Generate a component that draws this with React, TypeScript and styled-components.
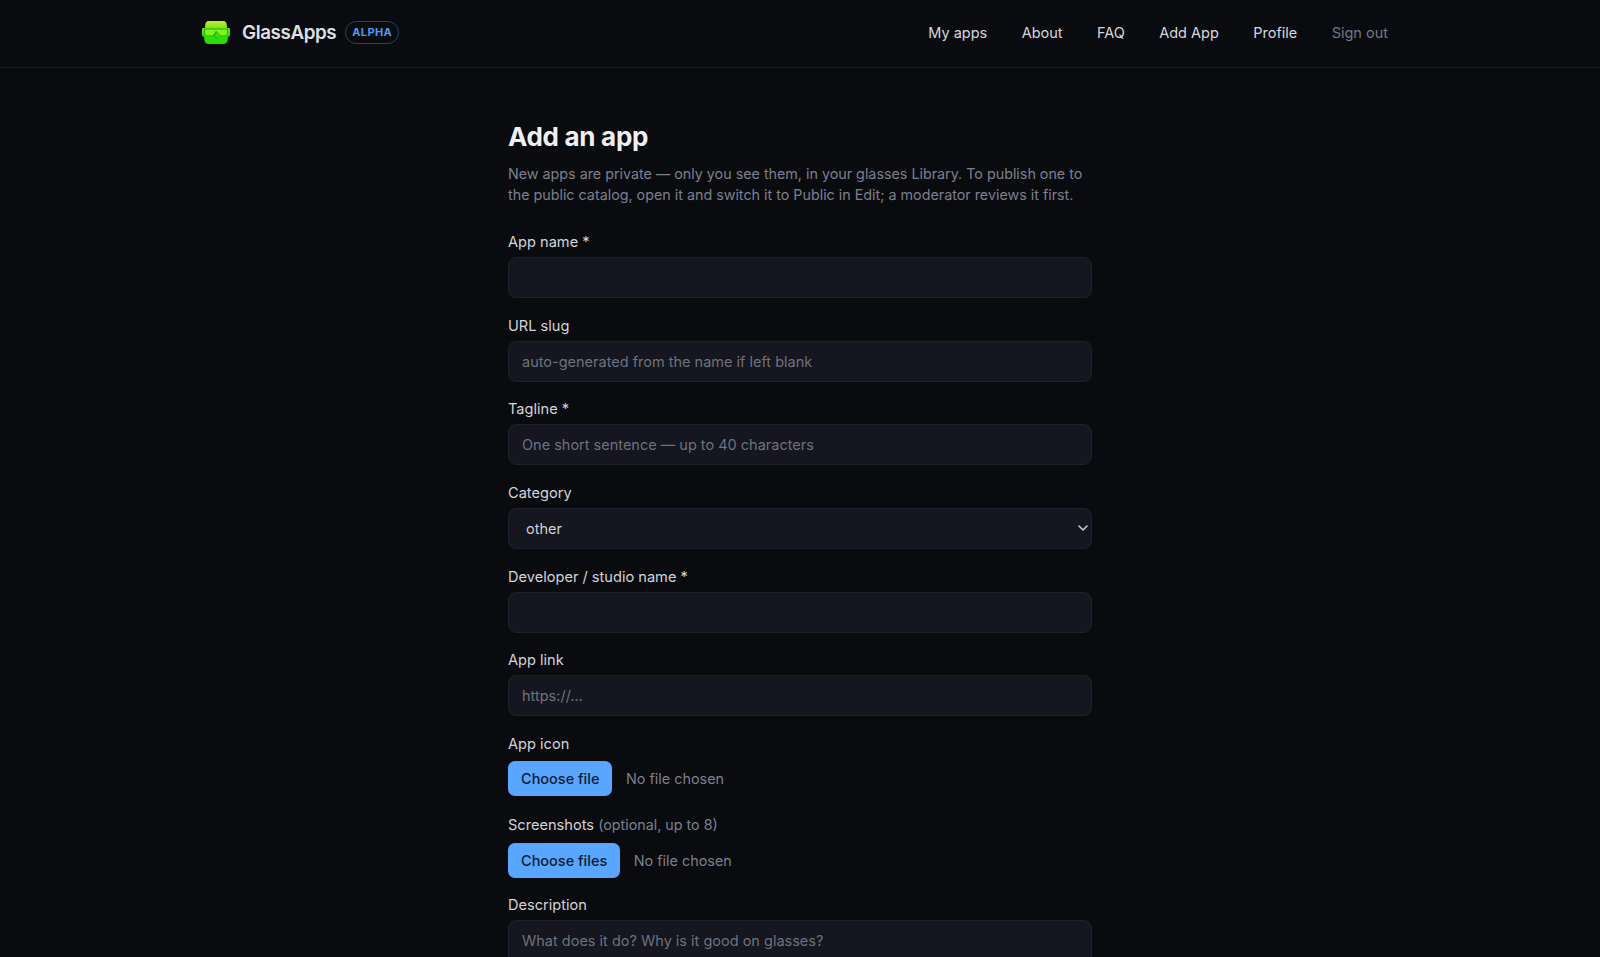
import React from 'react';
import styled, { createGlobalStyle } from 'styled-components';

const Global = createGlobalStyle`
  html, body { margin: 0; padding: 0; background: #0a0b0f; overflow: hidden; }
  body { font-family: Inter, "Liberation Sans", sans-serif; color: #e6e7ec; -webkit-font-smoothing: antialiased; }
  * { box-sizing: border-box; }
`;

const Header = styled.header`
  height: 68px;
  border-bottom: 1px solid #1b1c29;
  background: #0a0b0f;
`;
const HeaderInner = styled.div`
  width: 1200px;
  height: 100%;
  margin: 0 auto;
  display: flex;
  align-items: center;
  justify-content: space-between;
  padding: 0 12px 3px 2px;
`;
const Brand = styled.a`
  display: flex;
  align-items: center;
  color: #dfe0e4;
  font-size: 18.8px;
  font-weight: 600;
  letter-spacing: -0.4px;
`;
const Logo = styled.svg`
  width: 28px;
  height: 25px;
  margin-right: 12px;
`;
const Badge = styled.span`
  margin-left: 9px;
  height: 23px;
  padding: 0 6px;
  display: inline-flex;
  align-items: center;
  border: 1.5px solid #1f4475;
  border-radius: 12px;
  color: #4f9bf0;
  font-size: 11px;
  font-weight: 700;
  letter-spacing: 0.4px;
`;
const Nav = styled.nav`
  display: flex;
  gap: 34.4px;
`;
const NavLink = styled.a<{ $muted?: boolean }>`
  color: ${p => (p.$muted ? '#757788' : '#d6d7dc')};
  font-size: 14.5px;
  font-weight: 400;
`;
const Main = styled.main`
  width: 584px;
  margin: 0 auto;
  padding-top: 51px;
`;
const Title = styled.h1`
  margin: 0 0 8px;
  font-size: 26px;
  line-height: 36px;
  font-weight: 700;
  letter-spacing: -0.3px;
  color: #eeeff2;
`;
const Lead = styled.p`
  margin: 0 0 27px;
  color: #7d7f8e;
  font-size: 14.3px;
  line-height: 21px;
`;
const Field = styled.div`
  margin-bottom: 17.7px;
`;
const UploadField = styled.div<{ $gap: number }>`
  margin-bottom: ${p => p.$gap}px;
`;
const Label = styled.label<{ $gap?: number }>`
  display: block;
  margin-bottom: ${p => p.$gap ?? 4}px;
  height: 21px;
  line-height: 21px;
  color: #d3d4d9;
  font-size: 14.6px;
  font-weight: 400;
`;
const Hint = styled.span`
  color: #7d7f8e;
  font-size: 14.3px;
  font-weight: 400;
`;
const Input = styled.input`
  display: block;
  width: 100%;
  height: 41px;
  padding: 0 13px;
  background: #15161f;
  border: 1px solid #1f2029;
  border-radius: 8px;
  color: #e6e7ec;
  font: 400 14.5px Inter, "Liberation Sans", sans-serif;
  outline: none;
  &::placeholder { color: #6f717d; opacity: 1; }
`;
const SelectWrap = styled.div`
  position: relative;
`;
const Select = styled.select`
  display: block;
  width: 100%;
  height: 41px;
  padding: 0 17px;
  appearance: none;
  background: #15161f;
  border: 1px solid #1f2029;
  border-radius: 8px;
  color: #cfd0d6;
  font: 400 14.5px Inter, "Liberation Sans", sans-serif;
  outline: none;
`;
const Chevron = styled.svg`
  position: absolute;
  right: 3px;
  top: 14px;
  width: 12px;
  height: 12px;
  pointer-events: none;
`;
const FileRow = styled.div`
  display: flex;
  align-items: center;
  gap: 13.5px;
  height: 35px;
`;
const FileButton = styled.button`
  height: 35px;
  padding: 0 13px;
  border: none;
  border-radius: 7px;
  background: #58a6ff;
  color: #0c1a2e;
  font: 500 14.5px Inter, "Liberation Sans", sans-serif;
`;
const FileStatus = styled.span`
  color: #7d7f8e;
  font-size: 14.4px;
`;
const Textarea = styled.textarea`
  display: block;
  width: 100%;
  height: 120px;
  padding: 9px 13px;
  resize: none;
  background: #15161f;
  border: 1px solid #1f2029;
  border-radius: 8px;
  color: #e6e7ec;
  font: 400 14.5px/21px Inter, "Liberation Sans", sans-serif;
  outline: none;
  &::placeholder { color: #6f717d; opacity: 1; }
`;

const navItems = ['My apps', 'About', 'FAQ', 'Add App', 'Profile'];

export default function App() {
  return (
    <>
      <Global />
      <Header>
        <HeaderInner>
          <Brand>
            <Logo viewBox="0 0 28 25">
              <defs>
                <linearGradient id="headFill" x1="0" y1="0" x2="0" y2="1">
                  <stop offset="0" stopColor="#c9e82e" />
                  <stop offset="0.28" stopColor="#7fe81a" />
                  <stop offset="0.5" stopColor="#35ea05" />
                  <stop offset="1" stopColor="#22dc00" />
                </linearGradient>
              </defs>
              <path d="M7 1h14c2.500 0 3.500 1.500 3.800 4L25 8h1.500c.9 0 1.500.6 1.500 1.500V15c0 .9-.6 1.500-1.500 1.500H26l-.5 4c-.3 2.500-2 3.500-4 3.500H6.500c-2 0-3.700-1-4-3.500L2 16.500h-.5C.6 16.500 0 15.900 0 15V9.500C0 8.600.6 8 1.500 8H3l.2-3C3.500 2.500 4.500 1 7 1z" fill="url(#headFill)" />
              <path d="M2.500 9h23v4.500l-1.500 2.500h-5.500l-2.500-2.500-1.500-2-1.500 2-2.500 2.500H4l-1.500-2.500z" fill="#7cf51c" stroke="#2aa52e" strokeWidth="1" strokeLinejoin="round" />
              <path d="M14 11.500l-1.600 5 1.600 1.500h2" fill="none" stroke="#2aa52e" strokeWidth="1" strokeLinecap="round" strokeLinejoin="round" />
            </Logo>
            GlassApps
            <Badge>ALPHA</Badge>
          </Brand>
          <Nav>
            {navItems.map(n => (
              <NavLink key={n}>{n}</NavLink>
            ))}
            <NavLink $muted>Sign out</NavLink>
          </Nav>
        </HeaderInner>
      </Header>
      <Main>
        <Title>Add an app</Title>
        <Lead>
          New apps are private — only you see them, in your glasses Library. To publish one to the public catalog, open it and switch it to Public in Edit; a moderator reviews it first.
        </Lead>
        <Field>
          <Label>App name *</Label>
          <Input />
        </Field>
        <Field>
          <Label>URL slug</Label>
          <Input placeholder="auto-generated from the name if left blank" />
        </Field>
        <Field>
          <Label>Tagline *</Label>
          <Input placeholder="One short sentence — up to 40 characters" />
        </Field>
        <Field>
          <Label>Category</Label>
          <SelectWrap>
            <Select defaultValue="other">
              <option value="other">other</option>
            </Select>
            <Chevron viewBox="0 0 12 12">
              <path d="M2 4l4 4 4-4" fill="none" stroke="#c9cad0" strokeWidth="1.600" strokeLinecap="round" strokeLinejoin="round" />
            </Chevron>
          </SelectWrap>
        </Field>
        <Field>
          <Label>Developer / studio name *</Label>
          <Input />
        </Field>
        <Field>
          <Label>App link</Label>
          <Input placeholder="https://…" />
        </Field>
        <UploadField $gap={17.6}>
          <Label $gap={6}>App icon</Label>
          <FileRow>
            <FileButton>Choose file</FileButton>
            <FileStatus>No file chosen</FileStatus>
          </FileRow>
        </UploadField>
        <UploadField $gap={17.6}>
          <Label $gap={8}>Screenshots <Hint>(optional, up to 8)</Hint></Label>
          <FileRow>
            <FileButton>Choose files</FileButton>
            <FileStatus>No file chosen</FileStatus>
          </FileRow>
        </UploadField>
        <Field>
          <Label>Description</Label>
          <Textarea placeholder="What does it do? Why is it good on glasses?" />
        </Field>
      </Main>
    </>
  );
}
